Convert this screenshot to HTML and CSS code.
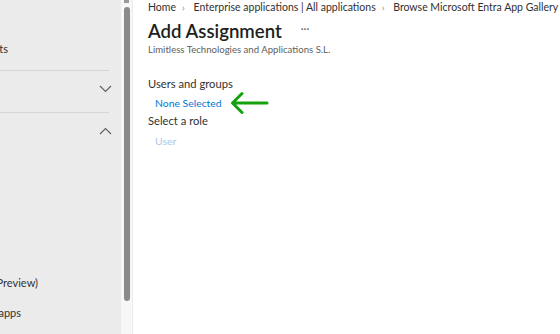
FILE: index.html
```html
<!DOCTYPE html>
<html>
<head>
<meta charset="utf-8">
<link rel="stylesheet" href="styles.css">
</head>
<body>
<div class="app">
  <aside class="sidebar">
    <div class="side-item first"><span class="cut cut-a">Manage alerts</span></div>
    <div class="sep"></div>
    <div class="side-group">
      <svg class="chev" width="13" height="8" viewBox="0 0 13 8"><path d="M1 1 L6.5 6.5 L12 1" fill="none" stroke="#605e5c" stroke-width="1.1"/></svg>
    </div>
    <div class="sep"></div>
    <div class="side-group">
      <svg class="chev" width="13" height="8" viewBox="0 0 13 8"><path d="M1 7 L6.5 1.5 L12 7" fill="none" stroke="#605e5c" stroke-width="1.1"/></svg>
    </div>
    <div class="spacer"></div>
    <div class="side-item"><span class="cut cut-b">Sign-in logs (Preview)</span></div>
    <div class="side-item last"><span class="cut cut-c">Enterprise apps</span></div>
  </aside>
  <div class="scroll">
    <div class="scroll-arrow"></div>
    <div class="thumb"></div>
  </div>
  <main class="content">
    <nav class="crumbs">
      <span>Home</span><span class="gt">›</span>
      <span>Enterprise applications | All applications</span><span class="gt">›</span>
      <span>Browse Microsoft Entra App Gallery</span>
    </nav>
    <div class="title-row">
      <h1>Add Assignment</h1>
      <span class="more">···</span>
    </div>
    <div class="subtitle">Limitless Technologies and Applications S.L.</div>
    <div class="label first-label">Users and groups</div>
    <div class="link-row">
      <a class="link">None Selected</a>
      <svg class="arrow" width="40" height="26" viewBox="0 0 40 26"><path d="M38 13 H4 M13 3.5 L3.5 13 L13 22.5" fill="none" stroke="#13a10e" stroke-width="3" stroke-linecap="round" stroke-linejoin="round"/></svg>
    </div>
    <div class="label">Select a role</div>
    <a class="link disabled">User</a>
  </main>
</div>
</body>
</html>
```
FILE: styles.css
```css
html, body {
  margin: 0;
  padding: 0;
  background: #ffffff;
}
body {
  font-family: "Lato", "Open Sans", sans-serif;
  color: #323130;
  width: 560px;
  height: 334px;
  overflow: hidden;
}
.app {
  display: flex;
  height: 334px;
}
.sidebar {
  width: 121px;
  flex: none;
  background: #ebebeb;
  display: flex;
  flex-direction: column;
  overflow: hidden;
  font-size: 11px;
}
.side-item {
  height: 30px;
  display: flex;
  align-items: center;
}
.side-item.first {
  margin-top: 33px;
  margin-bottom: 7px;
}
.cut {
  white-space: nowrap;
  text-align: right;
  display: block;
  width: 200px;
  flex: none;
}
.cut-a { margin-left: -192px; }
.cut-b { margin-left: -162px; }
.cut-c { margin-left: -179px; }
.sep {
  height: 1px;
  background: #d4d4d4;
  width: 109px;
}
.side-group {
  height: 41px;
  display: flex;
  align-items: center;
  justify-content: flex-end;
  padding-right: 9px;
  padding-bottom: 5px;
  width: 121px;
  box-sizing: border-box;
}
.spacer {
  flex: 1;
}
.side-item.last {
  margin-bottom: 7px;
}
.scroll {
  width: 11px;
  flex: none;
  background: #f7f7f7;
  border-right: 1px solid #ececec;
}
.scroll-arrow {
  width: 5px;
  height: 3px;
  background: #9a9a9a;
  margin: 0 auto;
}
.thumb {
  width: 6px;
  margin: 4px auto 0;
  height: 294px;
  background: #8a8a8a;
  border-radius: 3px;
}
.content {
  flex: 1;
  padding-left: 15px;
}
.crumbs {
  font-size: 10.5px;
  height: 15px;
  line-height: 14px;
  white-space: nowrap;
  color: #323130;
}
.gt {
  color: #8a8886;
  margin: 0 6px;
  font-size: 10px;
}
.title-row {
  display: flex;
  align-items: center;
  margin-top: 4px;
  height: 24px;
}
h1 {
  margin: 0;
  font-size: 18.6px;
  font-weight: 600;
  color: #201f1e;
}
.more {
  margin-left: 19px;
  font-size: 11px;
  color: #605e5c;
  position: relative;
  top: -3px;
}
.subtitle {
  font-size: 9.6px;
  color: #605e5c;
  margin-top: 1px;
}
.label {
  font-size: 11.2px;
  color: #323130;
  height: 18px;
  line-height: 18px;
}
.first-label {
  margin-top: 20px;
}
.link-row {
  display: flex;
  align-items: center;
  height: 19px;
}
.link {
  display: block;
  font-size: 10.4px;
  color: #0078d4;
  padding-left: 7px;
  line-height: 18px;
}
.arrow {
  margin-left: 7px;
}
.disabled {
  color: #a6c8ec;
  margin-top: 2px;
}
```
